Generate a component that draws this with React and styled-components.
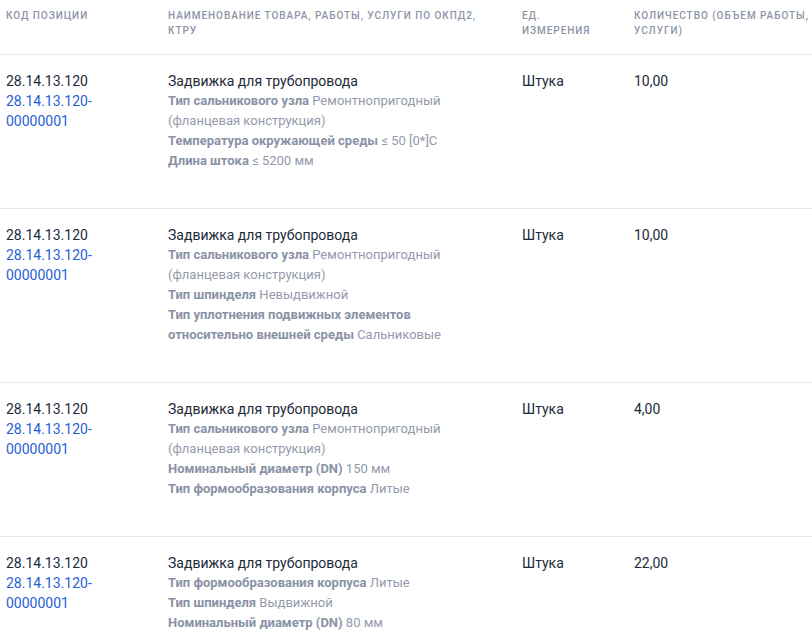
import React from 'react';
import styled, { createGlobalStyle } from 'styled-components';

const GlobalStyle = createGlobalStyle`
  html, body {
    margin: 0;
    padding: 0;
    background: #fff;
    font-family: Roboto, "Noto Sans", sans-serif;
    -webkit-font-smoothing: antialiased;
  }
`;

// right padding of each column, so the texts wrap where the original table wraps them
const gutters = ['16px', '40px', '30px', '0'];

const Table = styled.div`
  width: 812px;
`;

const Row = styled.div`
  display: grid;
  grid-template-columns: 162px 354px 112px 1fr;
  border-bottom: 1px solid #e6e8ee;
  padding: ${({ $head }) => ($head ? '8px 0 16px' : '16px 0 37px')};
`;

const HeadCell = styled.div`
  padding: 0 ${({ $pr }) => $pr} 0 6px;
  font-size: 10px;
  line-height: 15px;
  letter-spacing: 0.95px;
  font-weight: 500;
  text-transform: uppercase;
  color: #8c94a6;
`;

const Cell = styled.div`
  padding: 0 ${({ $pr }) => $pr} 0 6px;
  font-size: 14px;
  line-height: 20px;
  color: #222a3a;
`;

const Code = styled.div`
  color: ${({ $link }) => ($link ? '#1f5fd6' : '#222a3a')};
`;

const Title = styled.div`
  color: #222a3a;
`;

const Attr = styled.div`
  font-size: 13px;
  color: #939aab;
`;

const AttrName = styled.b`
  font-weight: 700;
  color: #8a92a6;
`;

const rows = [
  {
    qty: '10,00',
    attrs: [
      ['Тип сальникового узла', 'Ремонтнопригодный (фланцевая конструкция)'],
      ['Температура окружающей среды', '≤ 50 [0*]С'],
      ['Длина штока', '≤ 5200 мм'],
    ],
  },
  {
    qty: '10,00',
    attrs: [
      ['Тип сальникового узла', 'Ремонтнопригодный (фланцевая конструкция)'],
      ['Тип шпинделя', 'Невыдвижной'],
      ['Тип уплотнения подвижных элементов относительно внешней среды', 'Сальниковые'],
    ],
  },
  {
    qty: '4,00',
    attrs: [
      ['Тип сальникового узла', 'Ремонтнопригодный (фланцевая конструкция)'],
      ['Номинальный диаметр (DN)', '150 мм'],
      ['Тип формообразования корпуса', 'Литые'],
    ],
  },
  {
    qty: '22,00',
    attrs: [
      ['Тип формообразования корпуса', 'Литые'],
      ['Тип шпинделя', 'Выдвижной'],
      ['Номинальный диаметр (DN)', '80 мм'],
    ],
  },
];

const headers = [
  'Код позиции',
  'Наименование товара, работы, услуги по ОКПД2, КТРУ',
  'Ед. измерения',
  'Количество (объем работы, услуги)',
];

const App = () => (
  <>
    <GlobalStyle />
    <Table>
      <Row $head>
        {headers.map((h, i) => (
          <HeadCell key={h} $pr={gutters[i]}>
            {h}
          </HeadCell>
        ))}
      </Row>
      {rows.map((row, i) => (
        <Row key={i}>
          <Cell $pr={gutters[0]}>
            <Code>28.14.13.120</Code>
            <Code $link>28.14.13.120-00000001</Code>
          </Cell>
          <Cell $pr={gutters[1]}>
            <Title>Задвижка для трубопровода</Title>
            {row.attrs.map(([name, value]) => (
              <Attr key={name}>
                <AttrName>{name}</AttrName> {value}
              </Attr>
            ))}
          </Cell>
          <Cell $pr={gutters[2]}>Штука</Cell>
          <Cell $pr={gutters[3]}>{row.qty}</Cell>
        </Row>
      ))}
    </Table>
  </>
);

export default App;
